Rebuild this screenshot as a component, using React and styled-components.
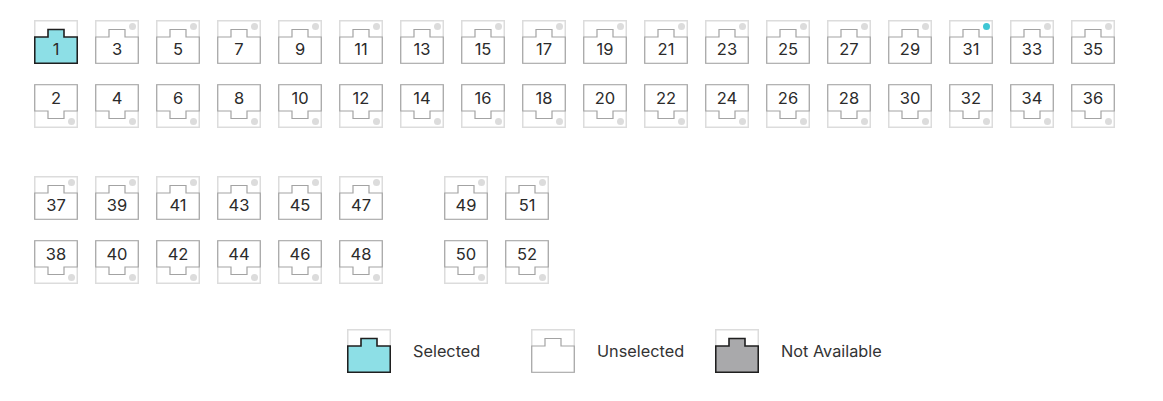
import React from 'react'
import styled, { createGlobalStyle } from 'styled-components'

const GlobalStyle = createGlobalStyle`
  body {
    margin: 0;
    background: #fff;
    font-family: Inter, "Noto Sans", sans-serif;
    color: #2b2b2b;
  }
`

const COLORS = {
  frame: '#dcdcdc',
  line: '#a3a3a3',
  dark: '#1f1f1f',
  selected: '#8ddfe6',
  blocked: '#a9a9ab',
  dot: '#dcdcdc',
  dotActive: '#3ec6d4'
}

const UI = {
  Page: styled.div`
    padding: 20px 0 0 34px;
    display: flex;
    flex-direction: column;
  `,
  Block: styled.div`
    display: flex;
    flex-direction: column;
    gap: 20px;
    margin-bottom: ${p => p.$after}px;
  `,
  Row: styled.div`
    display: flex;
    gap: 17px;
  `,
  Aisle: styled.div`
    width: 27px;
  `,
  Seat: styled.div`
    position: relative;
    width: 44px;
    height: 44px;
    display: flex;
    justify-content: center;
    align-items: flex-start;
    padding-top: ${p => (p.$top ? 19 : 4)}px;
    box-sizing: border-box;
    font-size: 16.5px;
    line-height: 20px;
    cursor: pointer;

    svg {
      position: absolute;
      inset: 0;
    }
  `,
  Num: styled.span`
    position: relative;
  `,
  Legend: styled.div`
    display: flex;
    padding-left: 313px;
  `,
  LegendItem: styled.div`
    display: flex;
    align-items: center;
    gap: 22px;
    width: 184px;
    font-size: 16.3px;
    color: #333;
  `,
  Swatch: styled.div`
    width: 44px;
    height: 44px;
    flex: none;
  `
}

function SeatShape({ top = true, fill = '#fff', stroke = COLORS.line, strokeWidth = 1.2, dot }) {
  const path = top
    ? 'M0.75 17 H14 V9.5 H30 V17 H43.25 V43.25 H0.75 Z'
    : 'M0.75 0.75 H43.25 V27 H30 V34.5 H14 V27 H0.75 Z'
  return (
    <svg width="44" height="44" viewBox="0 0 44 44">
      <rect x="0.75" y="0.75" width="42.5" height="42.5" fill="#fff" stroke={COLORS.frame} strokeWidth="1.5" />
      <path d={path} fill={fill} stroke={stroke} strokeWidth={strokeWidth} strokeLinejoin="miter" />
      {dot && <circle cx="37.5" cy={top ? 6.5 : 37.5} r="3.5" fill={dot} />}
    </svg>
  )
}

function Seat({ n, top, selected, active }) {
  return (
    <UI.Seat $top={top}>
      {selected ? (
        <SeatShape top={top} fill={COLORS.selected} stroke={COLORS.dark} strokeWidth={1.6} />
      ) : (
        <SeatShape top={top} dot={active ? COLORS.dotActive : COLORS.dot} />
      )}
      <UI.Num>{n}</UI.Num>
    </UI.Seat>
  )
}

const range = (from, count) => Array.from({ length: count }, (_, i) => from + i * 2)

function SeatRow({ groups, top = false }) {
  return (
    <UI.Row>
      {groups.map((g, gi) => (
        <React.Fragment key={gi}>
          {gi > 0 && <UI.Aisle />}
          {g.map(n => (
            <Seat key={n} n={n} top={top} selected={n === 1} active={n === 31} />
          ))}
        </React.Fragment>
      ))}
    </UI.Row>
  )
}

export default function App() {
  return (
    <>
      <GlobalStyle />
      <UI.Page>
        <UI.Block $after={48}>
          <SeatRow top groups={[range(1, 18)]} />
          <SeatRow groups={[range(2, 18)]} />
        </UI.Block>
        <UI.Block $after={45}>
          <SeatRow top groups={[range(37, 6), range(49, 2)]} />
          <SeatRow groups={[range(38, 6), range(50, 2)]} />
        </UI.Block>
        <UI.Legend>
          <UI.LegendItem>
            <UI.Swatch>
              <SeatShape fill={COLORS.selected} stroke={COLORS.dark} strokeWidth={1.6} />
            </UI.Swatch>
            Selected
          </UI.LegendItem>
          <UI.LegendItem>
            <UI.Swatch>
              <SeatShape />
            </UI.Swatch>
            Unselected
          </UI.LegendItem>
          <UI.LegendItem>
            <UI.Swatch>
              <SeatShape fill={COLORS.blocked} stroke={COLORS.dark} strokeWidth={1.6} />
            </UI.Swatch>
            Not Available
          </UI.LegendItem>
        </UI.Legend>
      </UI.Page>
    </>
  )
}
